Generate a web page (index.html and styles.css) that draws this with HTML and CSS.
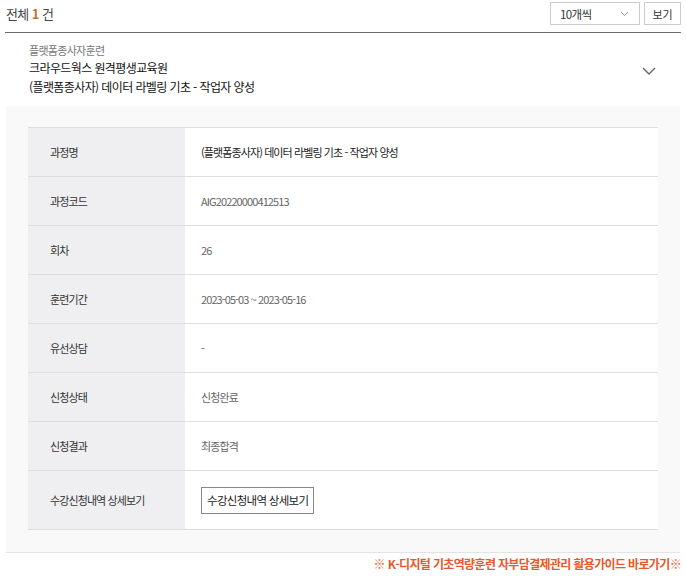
FILE: index.html
```html
<!DOCTYPE html>
<html lang="ko">
<head>
<meta charset="utf-8">
<link rel="stylesheet" href="styles.css">
</head>
<body>
<div class="page">
  <div class="toolbar">
    <div class="total">전체 <span class="count">1</span> 건</div>
    <div class="controls">
      <div class="select">
        <span>10개씩</span>
        <svg class="select-arrow" width="9" height="6" viewBox="0 0 9 6"><path d="M1 1l3.5 3.5L8 1" fill="none" stroke="#999" stroke-width="1"/></svg>
      </div>
      <button class="view-btn">보기</button>
    </div>
  </div>

  <div class="item-head">
    <div class="item-text">
      <div class="category">플랫폼종사자훈련</div>
      <div class="title">크라우드웍스 원격평생교육원</div>
      <div class="title">(플랫폼종사자) 데이터 라벨링 기초 - 작업자 양성</div>
    </div>
    <svg class="chevron" width="14" height="8" viewBox="0 0 14 8"><path d="M1 1l6 6 6-6" fill="none" stroke="#666" stroke-width="1.4"/></svg>
  </div>

  <div class="panel">
    <table class="info">
      <tr><th>과정명</th><td class="strong">(플랫폼종사자) 데이터 라벨링 기초 - 작업자 양성</td></tr>
      <tr><th>과정코드</th><td>AIG20220000412513</td></tr>
      <tr><th>회차</th><td>26</td></tr>
      <tr><th>훈련기간</th><td>2023-05-03 ~ 2023-05-16</td></tr>
      <tr><th>유선상담</th><td>-</td></tr>
      <tr><th>신청상태</th><td>신청완료</td></tr>
      <tr><th>신청결과</th><td>최종합격</td></tr>
      <tr class="last"><th>수강신청내역 상세보기</th><td><button class="detail-btn">수강신청내역 상세보기</button></td></tr>
    </table>
  </div>

  <div class="guide"><a href="#">※ K-디지털 기초역량훈련 자부담결제관리 활용가이드 바로가기※</a></div>
</div>
</body>
</html>
```

FILE: styles.css
```css
* { box-sizing: border-box; }
html, body { margin: 0; padding: 0; background: #fff; }
body {
  font-family: "Noto Sans CJK KR", "Noto Sans", sans-serif;
  color: #333;
  font-size: 12px;
}
.page { width: 686px; padding: 0 5px 0 5px; }

.toolbar {
  display: flex;
  justify-content: space-between;
  align-items: center;
  height: 33px;
  padding: 0 0 5px 1px;
  border-bottom: 1px solid #6b6b6b;
}
.total { font-size: 13px; color: #444; letter-spacing: -0.6px; }
.count { color: #c8702e; font-weight: 700; }
.controls { display: flex; gap: 4px; }
.select {
  width: 90px; height: 23px;
  border: 1px solid #ccc;
  display: flex; align-items: center; justify-content: space-between;
  padding: 0 10px 0 9px;
  font-size: 11.5px; color: #333;
  letter-spacing: -0.6px;
}
.view-btn {
  width: 37px; height: 23px;
  border: 1px solid #ccc; background: #fff;
  font-family: inherit; font-size: 11px; color: #333;
  padding: 0;
}

.item-head {
  display: flex; align-items: center; justify-content: space-between;
  padding: 9px 28px 10px 24px;
}
.category { font-size: 11px; color: #777; line-height: 16px; letter-spacing: -0.7px; }
.title { font-size: 12px; color: #111; line-height: 19px; letter-spacing: -0.6px; }
.chevron { margin-right: -3px; margin-top: 4px; }

.panel {
  background: #f9f9f9;
  margin: 0 1px;
  padding: 21px 22px 22px 22px;
  border-bottom: 1px solid #e4e4e4;
}
.info { width: 100%; border-collapse: collapse; border-top: 1px solid #dedede; }
.info th, .info td {
  height: 49px;
  border-bottom: 1px solid #dedede;
  font-weight: 400; text-align: left;
  font-size: 11px;
  letter-spacing: -0.9px;
}
.info th { width: 157px; background: #efeff1; color: #333; padding-left: 22px; }
.info td { background: #fff; color: #666; padding-left: 16px; }
.info td.strong { color: #222; }
.info tr.last th, .info tr.last td { height: 59px; }
.detail-btn {
  height: 27px; padding: 0 5px;
  border: 1px solid #888; background: #fff;
  font-family: inherit; font-size: 11.5px; color: #222; letter-spacing: -0.7px;
}

.guide { text-align: right; padding: 2px 0 0; }
.guide a {
  color: #e9582a; font-weight: 700; font-size: 12px; text-decoration: none;
  letter-spacing: -0.65px;
}
```
